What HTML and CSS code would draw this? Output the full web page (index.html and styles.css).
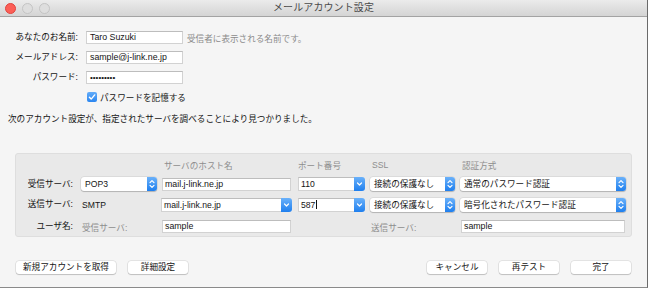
FILE: index.html
```html
<!DOCTYPE html>
<html lang="ja">
<head>
<meta charset="UTF-8">
<title>メールアカウント設定</title>
<link rel="stylesheet" href="styles.css">
</head>
<body>
<div class="window">
  <div class="titlebar">
    <div class="lights">
      <span class="light close"></span>
      <span class="light"></span>
      <span class="light"></span>
    </div>
    <div class="title">メールアカウント設定</div>
    <div></div>
  </div>

  <div class="content">
    <!-- 基本情報 -->
    <div class="account-form">
      <label class="lbl">あなたのお名前:</label>
      <div class="field">Taro Suzuki</div>
      <span class="hint">受信者に表示される名前です。</span>

      <label class="lbl">メールアドレス:</label>
      <div class="field">sample@j-link.ne.jp</div>
      <span></span>

      <label class="lbl">パスワード:</label>
      <div class="field dots">•••••••••</div>
      <span></span>
    </div>

    <div class="remember">
      <span class="checkbox"><svg viewBox="0 0 10 10" width="10" height="10"><path d="M2.4 5.2 L4.2 7.1 L7.7 2.9" fill="none" stroke="#fff" stroke-width="1.4" stroke-linecap="round" stroke-linejoin="round"/></svg></span>
      <span>パスワードを記憶する</span>
    </div>

    <p class="notice">次のアカウント設定が、指定されたサーバを調べることにより見つかりました。</p>

    <!-- サーバ設定 -->
    <div class="server-box">
      <span></span>
      <span></span>
      <span class="col-head">サーバのホスト名</span>
      <span class="col-head">ポート番号</span>
      <span class="col-head">SSL</span>
      <span class="col-head">認証方式</span>

      <label class="lbl">受信サーバ:</label>
      <div class="popup"><span class="val">POP3</span><span class="stepper"><svg viewBox="0 0 10 14" width="10" height="14"><path d="M3 5.6 L5 3.6 L7 5.6 M3 8.4 L5 10.4 L7 8.4" fill="none" stroke="#fff" stroke-width="1.2" stroke-linecap="round" stroke-linejoin="round"/></svg></span></div>
      <div class="field">mail.j-link.ne.jp</div>
      <div class="combo port"><span class="val">110</span><span class="drop"><svg viewBox="0 0 11 14" width="11" height="14"><path d="M3.5 6 L5.5 8 L7.5 6" fill="none" stroke="#fff" stroke-width="1.2" stroke-linecap="round" stroke-linejoin="round"/></svg></span></div>
      <div class="popup"><span class="val">接続の保護なし</span><span class="stepper"><svg viewBox="0 0 10 14" width="10" height="14"><path d="M3 5.6 L5 3.6 L7 5.6 M3 8.4 L5 10.4 L7 8.4" fill="none" stroke="#fff" stroke-width="1.2" stroke-linecap="round" stroke-linejoin="round"/></svg></span></div>
      <div class="popup"><span class="val">通常のパスワード認証</span><span class="stepper"><svg viewBox="0 0 10 14" width="10" height="14"><path d="M3 5.6 L5 3.6 L7 5.6 M3 8.4 L5 10.4 L7 8.4" fill="none" stroke="#fff" stroke-width="1.2" stroke-linecap="round" stroke-linejoin="round"/></svg></span></div>

      <label class="lbl">送信サーバ:</label>
      <span class="plain">SMTP</span>
      <div class="combo host"><span class="val">mail.j-link.ne.jp</span><span class="drop"><svg viewBox="0 0 11 14" width="11" height="14"><path d="M3.5 6 L5.5 8 L7.5 6" fill="none" stroke="#fff" stroke-width="1.2" stroke-linecap="round" stroke-linejoin="round"/></svg></span></div>
      <div class="combo port"><span class="val">587<i class="caret"></i></span><span class="drop"><svg viewBox="0 0 11 14" width="11" height="14"><path d="M3.5 6 L5.5 8 L7.5 6" fill="none" stroke="#fff" stroke-width="1.2" stroke-linecap="round" stroke-linejoin="round"/></svg></span></div>
      <div class="popup"><span class="val">接続の保護なし</span><span class="stepper"><svg viewBox="0 0 10 14" width="10" height="14"><path d="M3 5.6 L5 3.6 L7 5.6 M3 8.4 L5 10.4 L7 8.4" fill="none" stroke="#fff" stroke-width="1.2" stroke-linecap="round" stroke-linejoin="round"/></svg></span></div>
      <div class="popup"><span class="val">暗号化されたパスワード認証</span><span class="stepper"><svg viewBox="0 0 10 14" width="10" height="14"><path d="M3 5.6 L5 3.6 L7 5.6 M3 8.4 L5 10.4 L7 8.4" fill="none" stroke="#fff" stroke-width="1.2" stroke-linecap="round" stroke-linejoin="round"/></svg></span></div>

      <label class="lbl">ユーザ名:</label>
      <span class="plain muted">受信サーバ:</span>
      <div class="field">sample</div>
      <span></span>
      <span class="plain muted">送信サーバ:</span>
      <div class="field auth-user">sample</div>
    </div>

    <div class="actions">
      <div class="btn-group">
        <button class="btn wide">新規アカウントを取得</button>
        <button class="btn">詳細設定</button>
      </div>
      <div class="btn-group">
        <button class="btn">キャンセル</button>
        <button class="btn">再テスト</button>
        <button class="btn">完了</button>
      </div>
    </div>
  </div>
</div>
</body>
</html>
```

FILE: styles.css
```css
body {
  margin:0; background:#fff;
  font-family:"Liberation Sans", "Noto Sans CJK JP", sans-serif;
  font-size:8.6px; color:#141414;
}

.window {
  width:647px; height:287px;
  background:#f5f5f5;
  border-right:1px solid #6a6a6a; border-bottom:1px solid #8a8a8a;
  display:flex; flex-direction:column;
}

/* タイトルバー */
.titlebar {
  height:16px; flex:none;
  display:grid; grid-template-columns:1fr auto 1fr; align-items:center;
  background:linear-gradient(#ebebeb, #d4d4d4);
  border-bottom:1px solid #a3a3a3;
}
.lights { display:flex; gap:6px; padding-left:5px; }
.light {
  width:9px; height:9px; border-radius:50%;
  background:#dedede; border:0.5px solid #c4c4c4;
}
.light.close { background:#fc5f57; border-color:#e0443e; }
.title { font-size:10px; line-height:16px; color:#4a4a4a; letter-spacing:0.1px; }

.content { padding:14px 0 0 8px; display:flex; flex-direction:column; }

/* 上部フォーム */
.account-form {
  display:grid; grid-template-columns:78px 97px 1fr;
  grid-auto-rows:13px; row-gap:7px; align-items:center;
}
.lbl { text-align:right; padding-right:8px; line-height:13px; white-space:nowrap; }
.field {
  height:13px; box-sizing:border-box; background:#fff;
  border:1px solid #d2d2d2; border-top-color:#bdbdbd;
  padding-left:3px; line-height:11px; white-space:nowrap; overflow:hidden;
  font-size:8.8px;
}
.field.dots { font-size:8px; }
.hint { padding-left:4px; color:#8b8b8b; white-space:nowrap; }

.remember {
  margin-top:7px; padding-left:79px; height:12px;
  display:flex; align-items:center; gap:3px;
}
.checkbox {
  width:10px; height:10px; border-radius:2px; display:flex;
  background:linear-gradient(#63acf9, #2a86f0);
}

.notice { margin:10px 0 0; line-height:12px; }

/* サーバ設定ボックス */
.server-box {
  margin:28px 15px 0 7px; padding:2px 8px 0 6px;
  background:#e9e9e9; border:1px solid #dedede; border-radius:3px;
  height:84px; box-sizing:border-box;
  display:grid;
  grid-template-columns:54px 76px 129px 69px 85px 166px;
  grid-template-rows:18px 20px 21px 23px;
  column-gap:5px; align-items:center;
}
.server-box .lbl { padding-right:3px; }
.col-head { color:#8e8e8e; padding-left:2px; white-space:nowrap; }
.plain { padding-left:1px; white-space:nowrap; }
.muted { color:#8e8e8e; }

.popup, .combo {
  height:14px; box-sizing:border-box; display:flex; align-items:stretch;
  justify-content:space-between; white-space:nowrap;
}
.popup {
  background:#fff; border-radius:3px;
  box-shadow:0 0 0 0.5px rgba(0,0,0,0.12), 0 1px 1px rgba(0,0,0,0.18);
}
.popup .val { padding-left:4px; line-height:14px; }
.stepper {
  width:10px; display:flex; border-radius:0 3px 3px 0;
  background:linear-gradient(#6ab1fa, #1f7fee);
}
.combo .val {
  flex:1; background:#fff; border:1px solid #d2d2d2; border-top-color:#bdbdbd;
  border-right:none; padding-left:2px; line-height:12px;
}
.drop {
  width:11px; display:flex; border-radius:0 3px 3px 0;
  background:linear-gradient(#6ab1fa, #1f7fee);
}
.combo.port { margin-left:2px; }
.combo.host { margin-left:-1px; margin-right:-1px; }
.caret {
  display:inline-block; width:1px; height:9px; background:#111;
  vertical-align:-1px; margin-left:1px;
}
.server-box .field { padding-left:2px; }
.auth-user { margin-left:1px; margin-right:1px; }

/* 下部ボタン */
.actions {
  margin:24px 16px 0 8px;
  display:flex; justify-content:space-between;
}
.btn-group { display:flex; gap:12px; }
.btn {
  width:60px; height:13px; padding:0; border:none; border-radius:3px;
  background:#fff; color:#141414;
  font-family:inherit; font-size:8.6px; line-height:13px;
  box-shadow:0 0 0 0.5px rgba(0,0,0,0.14), 0 1px 1px rgba(0,0,0,0.16);
}
.btn.wide { width:100px; }
```
